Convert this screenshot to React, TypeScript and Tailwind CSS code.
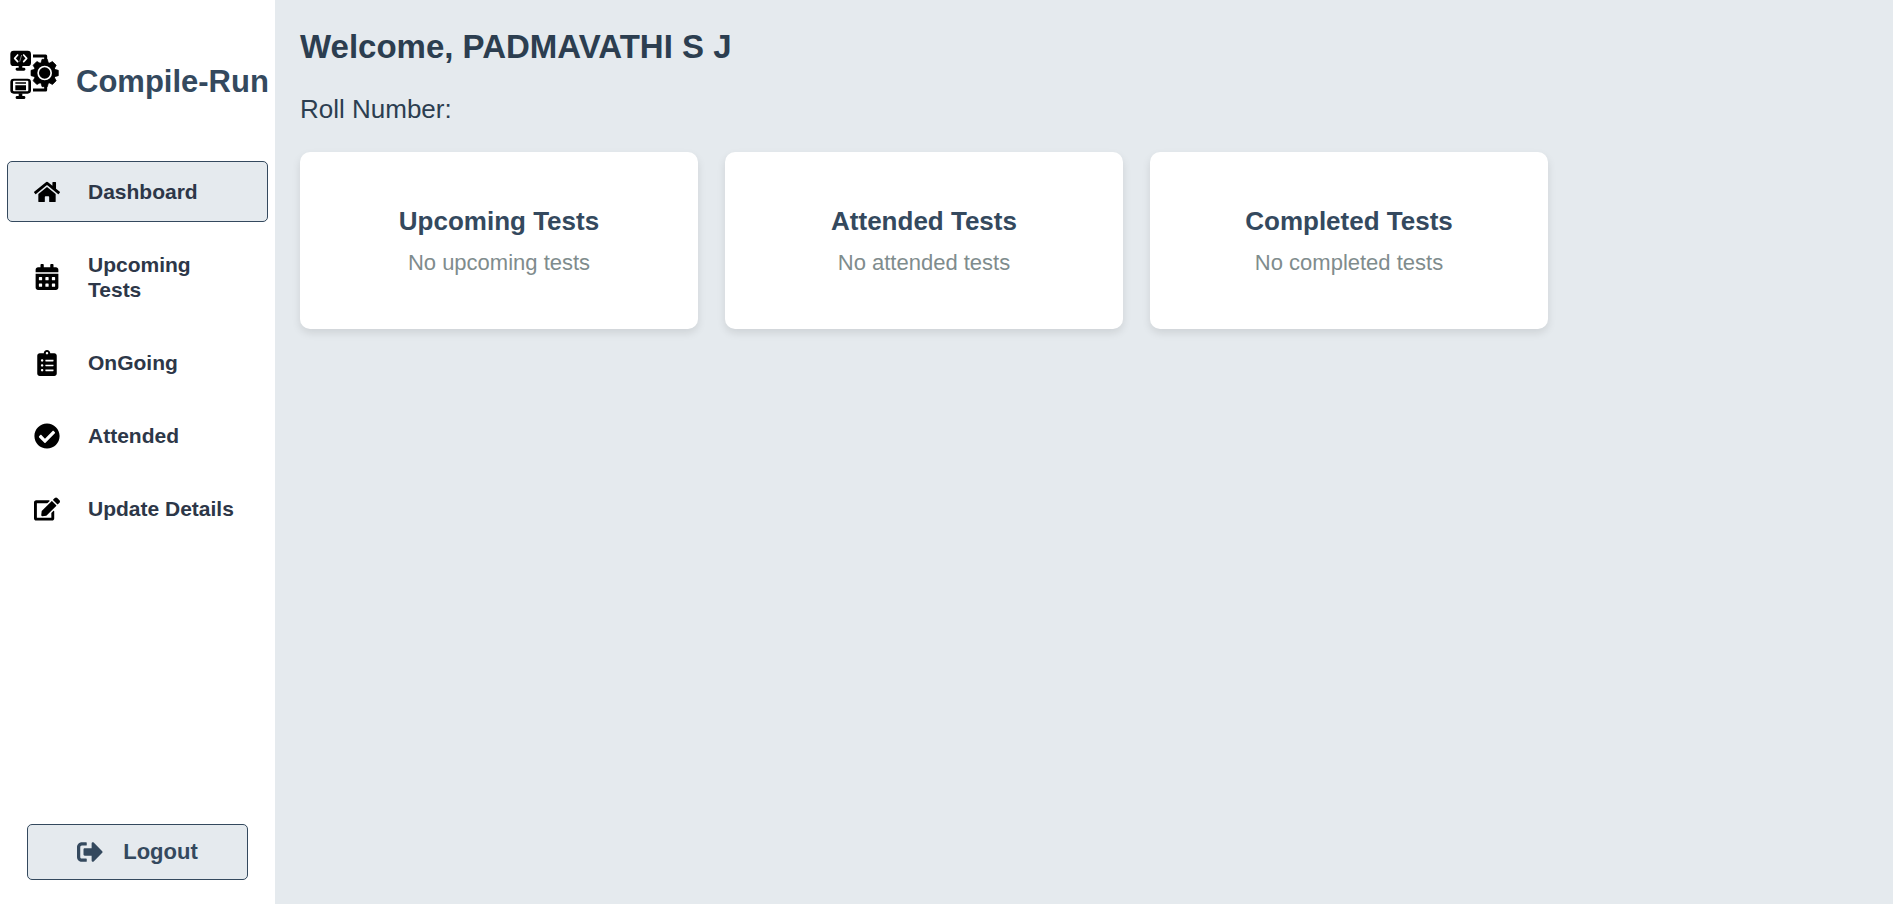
import type { ReactNode } from "react";
import {
  FaCalendarAlt,
  FaCheckCircle,
  FaClipboardList,
  FaEdit,
  FaHome,
  FaSignOutAlt,
} from "react-icons/fa";

const TEETH = [0, 45, 90, 135, 180, 225, 270, 315];

function Logo() {
  return (
    <svg viewBox="0 0 150 150" className="size-[50px] shrink-0" aria-hidden="true">
      <rect x="1" y="2" width="62" height="46" rx="10" />
      <path d="M26 46h11v10h-11z" />
      <rect x="17" y="53" width="29" height="9" rx="4" />
      <path
        d="M23 15 14 25l9 10M41 15l9 10-9 10"
        fill="none"
        stroke="white"
        strokeWidth="5"
        strokeLinecap="round"
        strokeLinejoin="round"
      />
      <path d="M35 15 29 35" stroke="white" strokeWidth="1.5" />
      <rect x="1" y="86" width="62" height="45" rx="10" />
      <path d="M26 130h11v10h-11z" />
      <rect x="17" y="138" width="29" height="9" rx="4" />
      <rect x="9" y="92" width="46" height="32" rx="3" fill="white" />
      <path d="M16 97h32v4h-32zM16 106h32v15h-32z" />
      <path d="M69 18h38v18M69 120h38v-18" fill="none" stroke="black" strokeWidth="9" strokeLinejoin="round" />
      <circle cx="104" cy="69" r="33" />
      {TEETH.map((angle) => (
        <path key={angle} d="M92 42 96 28h16l4 14z" stroke="black" strokeWidth="2" strokeLinejoin="round" transform={`rotate(${angle} 104 69)`} />
      ))}
      <circle cx="104" cy="69" r="19.5" fill="none" stroke="white" strokeWidth="5" />
    </svg>
  );
}

function NavItem({ icon, label, active = false }: { icon: ReactNode; label: string; active?: boolean }) {
  return (
    <a
      href="#"
      aria-current={active ? "page" : undefined}
      className={
        "flex items-center gap-7 rounded-[5px] border px-[26px] py-[17px] text-[21px] leading-[25px] font-bold text-[#2d3748] " +
        (active ? "border-[#34495e] bg-[#e5eaee]" : "border-transparent")
      }
    >
      <span className="flex h-[25px] w-[26px] shrink-0 items-center justify-center text-[26px] text-black">{icon}</span>
      <span>{label}</span>
    </a>
  );
}

function TestCard({ title, message }: { title: string; message: string }) {
  return (
    <section className="rounded-[10px] bg-white px-6 pt-[53px] pb-[52px] text-center shadow-[0_4px_8px_rgba(0,0,0,0.1)]">
      <h2 className="text-[26px] leading-8 font-bold text-[#34495e]">{title}</h2>
      <p className="mt-3 text-[22px] leading-7 text-[#7f8c8d]">{message}</p>
    </section>
  );
}

export default function App() {
  return (
    <div className="flex min-h-screen bg-[#e5eaee] font-['Liberation_Sans',Arial,sans-serif]">
      <aside className="flex w-[275px] shrink-0 flex-col bg-white pt-[50px] pb-6">
        <div className="flex items-start gap-4 pl-[10px]">
          <Logo />
          <span className="pt-[14px] text-[31px] leading-9 font-bold whitespace-nowrap text-[#34495e]">Compile-Run</span>
        </div>
        <nav className="mt-[61px] flex flex-col gap-3 px-[7px]">
          <NavItem icon={<FaHome />} label="Dashboard" active />
          <NavItem icon={<FaCalendarAlt />} label="Upcoming Tests" />
          <NavItem icon={<FaClipboardList />} label="OnGoing" />
          <NavItem icon={<FaCheckCircle />} label="Attended" />
          <NavItem icon={<FaEdit />} label="Update Details" />
        </nav>
        <button
          type="button"
          className="mx-[27px] mt-auto flex items-center justify-center gap-5 rounded-[5px] border border-[#34495e] bg-[#e5eaee] py-[14px] text-[22px] leading-[26px] font-bold text-[#34495e]"
        >
          <FaSignOutAlt className="text-[26px]" />
          Logout
        </button>
      </aside>
      <main className="min-w-0 flex-1 px-[25px] pt-[27px]">
        <h1 className="text-[33px] leading-10 font-bold text-[#2c3e50]">Welcome, PADMAVATHI S J</h1>
        <p className="mt-[26px] text-[26px] leading-8 text-[#2c3e50]">Roll Number:</p>
        <div className="mt-[27px] grid max-w-[1248px] grid-cols-3 gap-[27px]">
          <TestCard title="Upcoming Tests" message="No upcoming tests" />
          <TestCard title="Attended Tests" message="No attended tests" />
          <TestCard title="Completed Tests" message="No completed tests" />
        </div>
      </main>
    </div>
  );
}
